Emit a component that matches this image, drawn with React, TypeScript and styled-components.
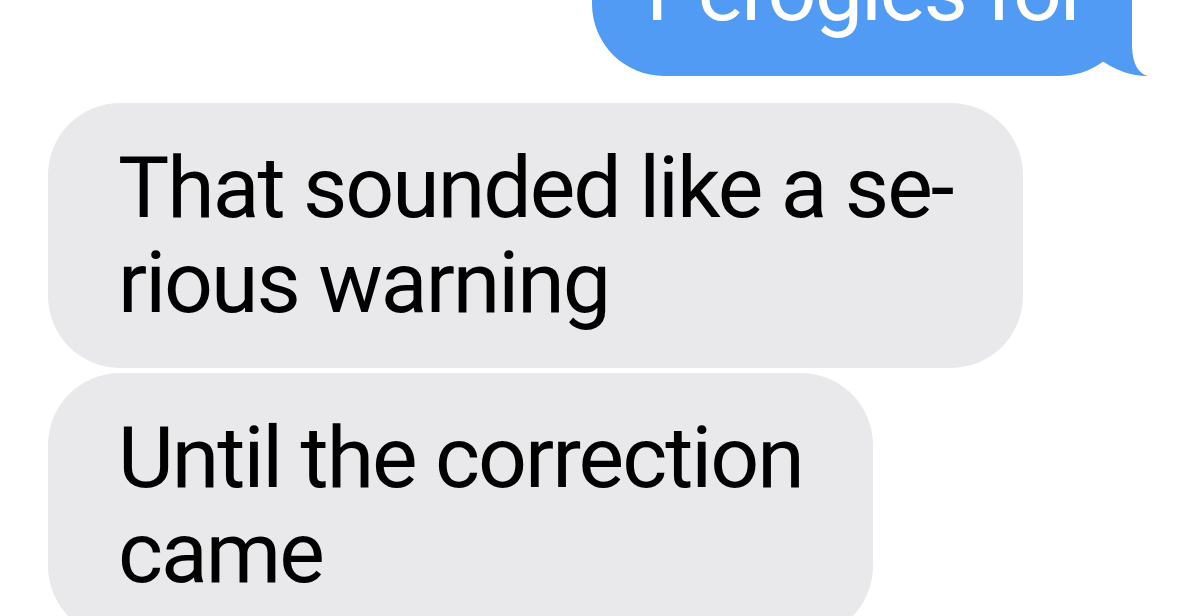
import React from "react";
import styled, { createGlobalStyle } from "styled-components";

const GlobalStyle = createGlobalStyle`
  html, body {
    margin: 0;
    padding: 0;
    background: #ffffff;
    overflow: hidden;
  }
  body {
    font-family: Roboto, "Liberation Sans", Arial, sans-serif;
  }
`;

const Thread = styled.div`
  display: flex;
  flex-direction: column;
  align-items: flex-start;
  padding: 0 47px 0 48px;
  margin-top: -94px;
`;

const Bubble = styled.div<{ $sent?: boolean; $gap: number }>`
  position: relative;
  box-sizing: border-box;
  margin-top: ${(props) => props.$gap + "px"};
  padding: 37px 70px 38px ${(props) => (props.$sent ? 54 : 70) + "px"};
  border-radius: 72px;
  background: ${(props) => (props.$sent ? "#519bf5" : "#e9e9eb")};
  color: ${(props) => (props.$sent ? "#ffffff" : "#000000")};
  align-self: ${(props) => (props.$sent ? "flex-end" : "flex-start")};
  font-size: 86px;
  line-height: 95px;
  letter-spacing: -2px;
  white-space: nowrap;
`;

const SentBubble = styled(Bubble)`
  width: 540px;
`;

const Line = styled.span`
  display: block;
`;

const Tail = styled.svg`
  position: absolute;
  right: -16px;
  bottom: 0;
  width: 50px;
  height: 80px;
`;

const messages = [
  { id: 1, lines: ["That sounded like a se-", "rious warning"] },
  { id: 2, lines: ["Until the correction", "came"] },
];

const App = () => {
  return (
    <>
      <GlobalStyle />
      <Thread>
        <SentBubble $sent $gap={0}>
          <Line>Perogies for</Line>
          <Tail viewBox="-34 -80 50 80">
            <path
              d="M -34 -80 L 0 -80 L 0 -29 Q 1 -4 16 0 Q -10 0 -34 -18 Z"
              fill="#519bf5"
            />
          </Tail>
        </SentBubble>
        {messages.map((msg, i) => (
          <Bubble key={msg.id} $gap={i === 0 ? 27 : 5}>
            {msg.lines.map((line) => (
              <Line key={line}>{line}</Line>
            ))}
          </Bubble>
        ))}
      </Thread>
    </>
  );
};

export default App;
